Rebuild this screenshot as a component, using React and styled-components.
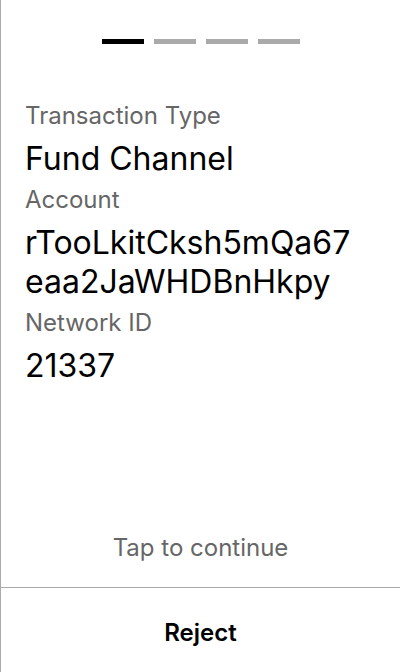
import styled, { createGlobalStyle } from 'styled-components';

const GlobalStyle = createGlobalStyle`
  html, body {
    margin: 0;
    padding: 0;
    background: #fff;
  }
  body {
    font-family: Inter, "Noto Sans", sans-serif;
  }
`

const fields = [
  { label: 'Transaction Type', value: 'Fund Channel' },
  { label: 'Account', value: 'rTooLkitCksh5mQa67eaa2JaWHDBnHkpy' },
  { label: 'Network ID', value: '21337' },
];

function App() {
  const step = 0;
  return (
    <Container>
      <GlobalStyle />
      <Steps>
        {[0, 1, 2, 3].map((i) => (
          <Step key={i} $active={i === step} />
        ))}
      </Steps>
      <Details>
        {fields.map((f) => (
          <Field key={f.label}>
            <Label>{f.label}</Label>
            <Value>{f.value}</Value>
          </Field>
        ))}
      </Details>
      <Continue>Tap to continue</Continue>
      <Footer>
        <RejectButton>Reject</RejectButton>
      </Footer>
    </Container>
  );
}

export default App;

const Container = styled.div`
  height: 100vh;
  box-sizing: border-box;
  border-left: 1px solid #aaa;
  display: flex;
  flex-direction: column;
`

const Steps = styled.div`
  display: flex;
  justify-content: center;
  gap: 10px;
  padding-top: 39px;
`

const Step = styled.div`
  width: 42px;
  height: 5px;
  background: ${(p) => (p.$active ? '#000' : '#aaa')};
`

const Details = styled.div`
  flex: 1;
  padding: 57px 44px 0 24px;
  display: flex;
  flex-direction: column;
  gap: 7px;
`

const Field = styled.div`
  display: flex;
  flex-direction: column;
  gap: 8px;
`

const Label = styled.div`
  font-size: 24px;
  line-height: 30px;
  color: #666;
`

const Value = styled.div`
  font-size: 32px;
  line-height: 39px;
  color: #000;
  word-break: break-all;
`

const Continue = styled.div`
  text-align: center;
  font-size: 24px;
  line-height: 29px;
  color: #666;
  padding-bottom: 25px;
`

const Footer = styled.div`
  border-top: 1px solid #aaa;
  height: 84px;
  display: flex;
  justify-content: center;
  align-items: center;
`

const RejectButton = styled.button`
  border: none;
  background: none;
  font-family: Inter, "Noto Sans", sans-serif;
  font-size: 24px;
  font-weight: 600;
  color: #000;
  padding: 0;
  margin-top: 4px;
`
